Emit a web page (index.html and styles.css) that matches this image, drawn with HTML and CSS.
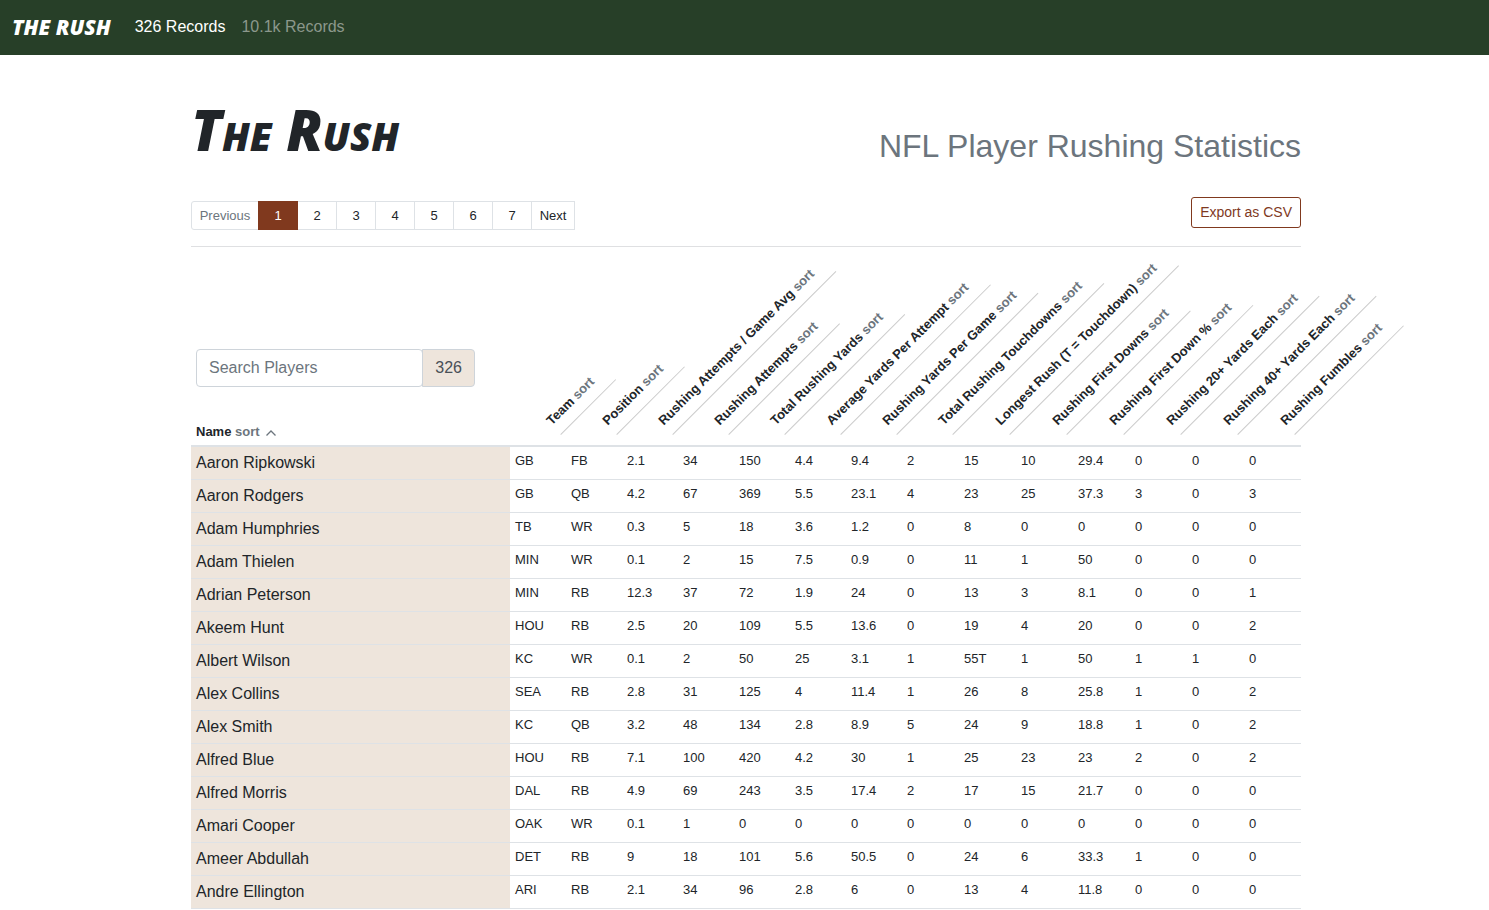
FILE: index.html
```html
<!DOCTYPE html>
<html lang="en">
<head>
<meta charset="utf-8">
<meta name="viewport" content="width=device-width, initial-scale=1">
<title>The Rush</title>
<link rel="stylesheet" href="styles.css">
</head>
<body>
<nav class="navbar">
  <a class="brand" href="#">the rush</a>
  <a class="nav-link active" href="#">326 Records</a>
  <a class="nav-link" href="#">10.1k Records</a>
</nav>
<main class="container">
  <header class="masthead">
    <h1 class="title">The Rush</h1>
    <h2 class="subtitle">NFL Player Rushing Statistics</h2>
  </header>
  <div class="toolbar">
    <div class="pagination">
      <button class="page prev" disabled>Previous</button>
      <button class="page current">1</button>
      <button class="page">2</button>
      <button class="page">3</button>
      <button class="page">4</button>
      <button class="page">5</button>
      <button class="page">6</button>
      <button class="page">7</button>
      <button class="page next">Next</button>
    </div>
    <button class="export">Export as CSV</button>
  </div>
  <table class="stats">
    <colgroup><col><col class="col-a" span="7"><col class="col-b" span="7"></colgroup>
    <thead>
      <tr>
        <th class="name-head">
          <div class="search">
            <input class="search-input" type="text" placeholder="Search Players" aria-label="Search Players">
            <span class="search-count">326</span>
          </div>
          <div class="name-label">Name <button class="sort">sort</button>
            <svg class="caret" viewBox="0 0 10 6" aria-hidden="true"><path d="M0.5 5.5 L5 1 L9.5 5.5" fill="none" stroke="currentColor" stroke-width="1.3"/></svg>
          </div>
        </th>
        <th class="slant"><div>Team <button class="sort">sort</button></div></th>
        <th class="slant"><div>Position <button class="sort">sort</button></div></th>
        <th class="slant"><div>Rushing Attempts / Game Avg <button class="sort">sort</button></div></th>
        <th class="slant"><div>Rushing Attempts <button class="sort">sort</button></div></th>
        <th class="slant"><div>Total Rushing Yards <button class="sort">sort</button></div></th>
        <th class="slant"><div>Average Yards Per Attempt <button class="sort">sort</button></div></th>
        <th class="slant"><div>Rushing Yards Per Game <button class="sort">sort</button></div></th>
        <th class="slant"><div>Total Rushing Touchdowns <button class="sort">sort</button></div></th>
        <th class="slant"><div>Longest Rush (T = Touchdown) <button class="sort">sort</button></div></th>
        <th class="slant"><div>Rushing First Downs <button class="sort">sort</button></div></th>
        <th class="slant"><div>Rushing First Down % <button class="sort">sort</button></div></th>
        <th class="slant"><div>Rushing 20+ Yards Each <button class="sort">sort</button></div></th>
        <th class="slant"><div>Rushing 40+ Yards Each <button class="sort">sort</button></div></th>
        <th class="slant"><div>Rushing Fumbles <button class="sort">sort</button></div></th>
      </tr>
    </thead>
    <tbody>
      <tr><th scope="row">Aaron Ripkowski</th><td>GB</td><td>FB</td><td>2.1</td><td>34</td><td>150</td><td>4.4</td><td>9.4</td><td>2</td><td>15</td><td>10</td><td>29.4</td><td>0</td><td>0</td><td>0</td></tr>
      <tr><th scope="row">Aaron Rodgers</th><td>GB</td><td>QB</td><td>4.2</td><td>67</td><td>369</td><td>5.5</td><td>23.1</td><td>4</td><td>23</td><td>25</td><td>37.3</td><td>3</td><td>0</td><td>3</td></tr>
      <tr><th scope="row">Adam Humphries</th><td>TB</td><td>WR</td><td>0.3</td><td>5</td><td>18</td><td>3.6</td><td>1.2</td><td>0</td><td>8</td><td>0</td><td>0</td><td>0</td><td>0</td><td>0</td></tr>
      <tr><th scope="row">Adam Thielen</th><td>MIN</td><td>WR</td><td>0.1</td><td>2</td><td>15</td><td>7.5</td><td>0.9</td><td>0</td><td>11</td><td>1</td><td>50</td><td>0</td><td>0</td><td>0</td></tr>
      <tr><th scope="row">Adrian Peterson</th><td>MIN</td><td>RB</td><td>12.3</td><td>37</td><td>72</td><td>1.9</td><td>24</td><td>0</td><td>13</td><td>3</td><td>8.1</td><td>0</td><td>0</td><td>1</td></tr>
      <tr><th scope="row">Akeem Hunt</th><td>HOU</td><td>RB</td><td>2.5</td><td>20</td><td>109</td><td>5.5</td><td>13.6</td><td>0</td><td>19</td><td>4</td><td>20</td><td>0</td><td>0</td><td>2</td></tr>
      <tr><th scope="row">Albert Wilson</th><td>KC</td><td>WR</td><td>0.1</td><td>2</td><td>50</td><td>25</td><td>3.1</td><td>1</td><td>55T</td><td>1</td><td>50</td><td>1</td><td>1</td><td>0</td></tr>
      <tr><th scope="row">Alex Collins</th><td>SEA</td><td>RB</td><td>2.8</td><td>31</td><td>125</td><td>4</td><td>11.4</td><td>1</td><td>26</td><td>8</td><td>25.8</td><td>1</td><td>0</td><td>2</td></tr>
      <tr><th scope="row">Alex Smith</th><td>KC</td><td>QB</td><td>3.2</td><td>48</td><td>134</td><td>2.8</td><td>8.9</td><td>5</td><td>24</td><td>9</td><td>18.8</td><td>1</td><td>0</td><td>2</td></tr>
      <tr><th scope="row">Alfred Blue</th><td>HOU</td><td>RB</td><td>7.1</td><td>100</td><td>420</td><td>4.2</td><td>30</td><td>1</td><td>25</td><td>23</td><td>23</td><td>2</td><td>0</td><td>2</td></tr>
      <tr><th scope="row">Alfred Morris</th><td>DAL</td><td>RB</td><td>4.9</td><td>69</td><td>243</td><td>3.5</td><td>17.4</td><td>2</td><td>17</td><td>15</td><td>21.7</td><td>0</td><td>0</td><td>0</td></tr>
      <tr><th scope="row">Amari Cooper</th><td>OAK</td><td>WR</td><td>0.1</td><td>1</td><td>0</td><td>0</td><td>0</td><td>0</td><td>0</td><td>0</td><td>0</td><td>0</td><td>0</td><td>0</td></tr>
      <tr><th scope="row">Ameer Abdullah</th><td>DET</td><td>RB</td><td>9</td><td>18</td><td>101</td><td>5.6</td><td>50.5</td><td>0</td><td>24</td><td>6</td><td>33.3</td><td>1</td><td>0</td><td>0</td></tr>
      <tr><th scope="row">Andre Ellington</th><td>ARI</td><td>RB</td><td>2.1</td><td>34</td><td>96</td><td>2.8</td><td>6</td><td>0</td><td>13</td><td>4</td><td>11.8</td><td>0</td><td>0</td><td>0</td></tr>
    </tbody>
  </table>
</main>
</body>
</html>
```

FILE: styles.css
```css
* { box-sizing: border-box; }
body {
  margin: 0;
  background: #fff;
  color: #212529;
  font: 16px/24px "Liberation Sans", Arial, sans-serif;
}
button { font: inherit; margin: 0; cursor: pointer; }

.navbar {
  display: flex;
  align-items: center;
  min-height: 55px;
  padding: 0 12px 2px;
  background: #273f28;
}
.brand {
  margin-right: 16px;
  color: #fff;
  font: italic 800 21px/32px "Open Sans", sans-serif;
  text-transform: uppercase;
  text-decoration: none;
}
.nav-link {
  padding: 8px;
  color: #8c988c;
  text-decoration: none;
}
.nav-link.active { color: #fff; }

.container {
  max-width: 1113px;
  margin: 0 auto;
  padding-left: 3px;
}
.masthead {
  display: flex;
  justify-content: space-between;
  align-items: flex-end;
  padding-top: 48px;
}
.title {
  margin: 0;
  padding-bottom: 8px;
  font: italic 800 56px/52px "Open Sans", sans-serif;
  font-variant: small-caps;
}
.subtitle {
  margin: 0;
  color: #6c757d;
  font-size: 32px;
  font-weight: 400;
  line-height: 34px;
}

.toolbar {
  display: flex;
  justify-content: space-between;
  align-items: flex-start;
  padding: 34px 0 16px;
  border-bottom: 1px solid #dfe0e2;
}
.pagination { display: flex; padding-top: 4px; font-size: 13px; }
.page {
  width: 40px;
  height: 29px;
  margin-left: -1px;
  padding: 0;
  border: 1px solid #dee2e6;
  background: #fff;
  color: #212529;
}
.page.prev { width: 68px; margin-left: 0; border-radius: 3px 0 0 3px; color: #6c757d; }
.page.next { width: 44px; }
.page.current { z-index: 1; border-color: #80391e; background: #80391e; color: #fff; }
.export {
  padding: 4px 8px;
  border: 1px solid #80391e;
  border-radius: 3px;
  background: #fff;
  color: #80391e;
  font-size: 14px;
  line-height: 21px;
}

.stats {
  width: 100%;
  margin-top: 16px;
  border-spacing: 0;
  table-layout: fixed;
  font-size: 13px;
  line-height: 20px;
}
.col-a { width: 56px; }
.col-b { width: 57px; }
.stats thead th {
  height: 184px;
  vertical-align: bottom;
  text-align: left;
  border-bottom: 2px solid #dee2e6;
}
.stats .name-head { padding: 0 5px 3px; }
.search {
  display: flex;
  width: 279px;
  margin-bottom: 35px;
  font-size: 16px;
  font-weight: 400;
  line-height: 24px;
}
.search-input {
  flex: 1;
  min-width: 0;
  padding: 6px 12px;
  border: 1px solid #ced4da;
  border-radius: 4px;
  background: #fff;
  color: #495057;
  font: inherit;
}
.search-input::placeholder { color: #6c757d; opacity: 1; }
.search-count {
  margin-left: -1px;
  padding: 6px 12px;
  border: 1px solid #ced4da;
  border-radius: 0 4px 4px 0;
  background: #eee5dc;
  color: #495057;
}
.sort {
  padding: 0;
  border: 0;
  background: none;
  color: #6c757d;
}
.caret { width: 10px; height: 6px; margin-left: 3px; color: #6c757d; }
.stats .slant { padding: 0 0 10px 51px; white-space: nowrap; }
.slant div {
  width: max-content;
  padding: 5px 17px 6px 0;
  border-bottom: 1px solid #ccc;
  transform: rotate(-45deg);
  transform-origin: left bottom;
}

.stats tbody th,
.stats td {
  padding: 4px 5px;
  border-bottom: 1px solid #dee2e6;
  text-align: left;
  vertical-align: top;
}
.stats tbody th {
  background: #eee5dc;
  font-size: 16px;
  font-weight: 400;
  line-height: 24px;
}
```
